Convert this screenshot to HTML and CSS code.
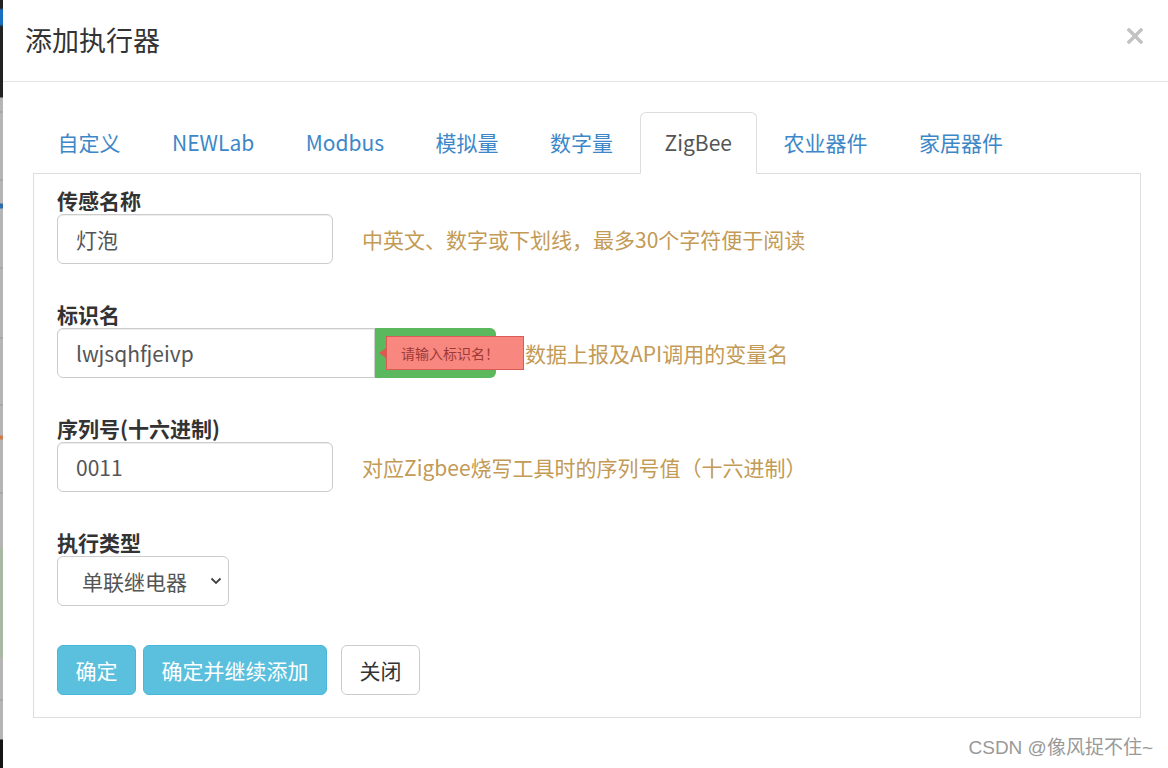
FILE: index.html
```
<!DOCTYPE html>
<html lang="zh-CN">
<head>
	<meta charset="UTF-8">
	<meta name="viewport" content="width=device-width, initial-scale=1.0">
	<title>添加执行器</title>
	<link rel="stylesheet" href="styles.css">
</head>
<body>
	<div class="backdrop-strip"></div>

	<div class="modal">
		<div class="modal-header">
			<h4 class="modal-title">添加执行器</h4>
			<button class="close" type="button">
				<svg width="16" height="16" viewBox="0 0 16 16">
					<path d="M2 2 L14 14 M14 2 L2 14" stroke="#c2c2c2" stroke-width="3.4" stroke-linecap="square"/>
				</svg>
			</button>
		</div>

		<div class="modal-body">
			<ul class="nav-tabs">
				<li><a href="#">自定义</a></li>
				<li><a href="#">NEWLab</a></li>
				<li><a href="#">Modbus</a></li>
				<li><a href="#">模拟量</a></li>
				<li><a href="#">数字量</a></li>
				<li class="active"><a href="#">ZigBee</a></li>
				<li><a href="#">农业器件</a></li>
				<li><a href="#">家居器件</a></li>
			</ul>

			<div class="tab-content">
				<div class="form-group">
					<label>传感名称</label>
					<div class="form-row">
						<input class="form-control" type="text" value="灯泡">
						<span class="help">中英文、数字或下划线，最多30个字符便于阅读</span>
					</div>
				</div>

				<div class="form-group">
					<label>标识名</label>
					<div class="form-row">
						<div class="input-group">
							<input class="form-control" type="text" value="lwjsqhfjeivp">
							<span class="addon"></span>
							<div class="tip">请输入标识名！</div>
						</div>
						<span class="help">数据上报及API调用的变量名</span>
					</div>
				</div>

				<div class="form-group">
					<label>序列号(十六进制)</label>
					<div class="form-row">
						<input class="form-control" type="text" value="0011">
						<span class="help">对应Zigbee烧写工具时的序列号值（十六进制）</span>
					</div>
				</div>

				<div class="form-group last">
					<label>执行类型</label>
					<div class="form-row">
						<div class="select-wrap">
							<select class="form-select">
								<option>单联继电器</option>
								<option>双联继电器</option>
							</select>
							<svg class="caret" width="12" height="8" viewBox="0 0 12 8">
								<path d="M1.5 1.5 L6 6 L10.5 1.5" fill="none" stroke="#444" stroke-width="1.9"/>
							</svg>
						</div>
					</div>
				</div>

				<div class="actions">
					<button class="btn btn-info">确定</button>
					<button class="btn btn-info">确定并继续添加</button>
					<button class="btn btn-default">关闭</button>
				</div>
			</div>
		</div>

		<div class="watermark">CSDN @像风捉不住~</div>
	</div>
</body>
</html>
```

FILE: styles.css
```
body {
	margin: 0;
	height: 768px;
	overflow: hidden;
	display: flex;
	font-family: "Noto Sans CJK SC", "Noto Sans", sans-serif;
	color: #333;
}

/* page behind the dialog, only a sliver shows */
.backdrop-strip {
	width: 3px;
	flex-shrink: 0;
	background: linear-gradient(to bottom,
		#222 0, #222 8px, #1c6fc0 10px, #1c6fc0 24px, #222 27px, #222 97px,
		#b5b5b5 98px, #b5b5b5 111px, #999 112px, #b5b5b5 113px,
		#b5b5b5 179px, #999 180px, #b5b5b5 181px,
		#b5b5b5 203px, #2a6fa8 204px, #2a6fa8 208px, #b5b5b5 209px,
		#b5b5b5 267px, #999 268px, #b5b5b5 269px,
		#b5b5b5 337px, #999 338px, #b5b5b5 339px,
		#b5b5b5 404px, #999 405px, #b5b5b5 406px,
		#b5b5b5 435px, #d07a4a 436px, #d07a4a 439px, #b5b5b5 440px,
		#b5b5b5 492px, #999 493px, #b5b5b5 494px,
		#b5b5b5 547px, #a9b8a2 548px, #a9b8a2 657px, #b5b5b5 658px,
		#b5b5b5 699px, #999 700px, #b5b5b5 701px,
		#b5b5b5 739px, #151515 740px, #151515 768px);
}

.modal {
	position: relative;
	width: 1168px;
	flex-shrink: 0;
	background: #fff;
}

.modal-header {
	height: 81px;
	border-bottom: 1px solid #e5e5e5;
	padding: 0 28px 0 22px;
	display: flex;
	align-items: center;
	justify-content: space-between;
}
.modal-title {
	margin: 0;
	font-size: 27px;
	font-weight: normal;
	color: #333;
	padding-bottom: 3px;
}
.close {
	border: none;
	background: none;
	padding: 0;
	margin-top: -9px;
	cursor: pointer;
	display: flex;
}

.modal-body {
	padding: 30px 30px 0 30px;
}

.nav-tabs {
	list-style: none;
	margin: 0;
	padding: 0;
	display: flex;
	border-bottom: 1px solid #ddd;

	li {
		margin-bottom: -1px;
		margin-right: 2px;
	}
	a {
		display: block;
		padding: 13px 24px 15px 23.5px;
		line-height: 32px;
		font-size: 21px;
		color: #3d87c8;
		text-decoration: none;
		border: 1px solid transparent;
		border-radius: 6px 6px 0 0;
	}
	.active a {
		color: #555;
		background: #fff;
		border-color: #ddd #ddd transparent;
	}
}

.tab-content {
	border: 1px solid #ddd;
	border-top: none;
	padding: 12px 23px 22px;
}

.form-group {
	margin-bottom: 36px;

	&.last {
		margin-bottom: 39px;
	}
	label {
		display: block;
		font-size: 21px;
		font-weight: bold;
		line-height: 28px;
		color: #333;
	}
}
.form-row {
	display: flex;
	align-items: center;
}
.help {
	margin-left: 29px;
	font-size: 21px;
	color: #c39a56;
}

.form-control {
	box-sizing: border-box;
	width: 276px;
	height: 50px;
	padding: 0 18px;
	font-family: inherit;
	font-size: 21px;
	color: #555;
	border: 1px solid #ccc;
	border-radius: 6px;
	box-shadow: inset 0 1px 1px rgba(0, 0, 0, .075);
	outline: none;
}

.input-group {
	position: relative;
	display: flex;

	.form-control {
		width: 318px;
		border-radius: 6px 0 0 6px;
	}
	.addon {
		width: 121px;
		height: 50px;
		background: #5cb85c;
		border-radius: 0 6px 6px 0;
	}
}

.tip {
	position: absolute;
	left: 329px;
	top: 8px;
	box-sizing: border-box;
	width: 138px;
	height: 34px;
	line-height: 32px;
	padding-left: 14px;
	font-size: 14px;
	color: #9e3a36;
	background: #f7877f;
	border: 1px solid #dc5a55;

	&::before {
		content: "";
		position: absolute;
		left: -8px;
		top: 11px;
		border-style: solid;
		border-width: 5px 7px 5px 0;
		border-color: transparent #dc5a55 transparent transparent;
	}
}

.select-wrap {
	position: relative;
	display: flex;

	.caret {
		position: absolute;
		right: 7px;
		top: 21px;
		pointer-events: none;
	}
}
.form-select {
	appearance: none;
	width: 172px;
	height: 50px;
	padding: 0 10px 0 24px;
	font-family: inherit;
	font-size: 21px;
	color: #555;
	background: #fff;
	border: 1px solid #ccc;
	border-radius: 6px;
}

.actions {
	display: flex;
	gap: 7px;

	.btn-default {
		margin-left: 7px;
	}
}
.btn {
	height: 50px;
	padding: 0 17.5px;
	font-family: inherit;
	font-size: 21px;
	border: 1px solid transparent;
	border-radius: 6px;
	cursor: pointer;
}
.btn-info {
	color: #fff;
	background: #5bc0de;
	border-color: #46b8da;
}
.btn-default {
	color: #333;
	background: #fff;
	border-color: #ccc;
}

.watermark {
	position: absolute;
	right: 18px;
	bottom: 9px;
	font-family: "Liberation Sans", "Noto Sans CJK SC", sans-serif;
	font-size: 19px;
	color: #999;
}
```
